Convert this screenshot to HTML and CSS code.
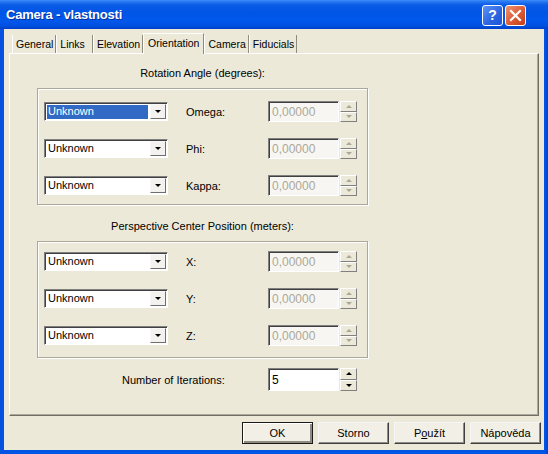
FILE: index.html
```html
<!DOCTYPE html>
<html>
<head>
<meta charset="utf-8">
<link rel="stylesheet" href="styles.css">
</head>
<body>
<div class="window">
  <div class="titlebar">
    <span class="title">Camera - vlastnosti</span>
    <div class="tb-buttons">
      <span class="tb-btn help">?</span>
      <span class="tb-btn close"><svg width="13" height="13" viewBox="0 0 13 13"><path d="M2 2 L11 11 M11 2 L2 11" stroke="#fff" stroke-width="2.2" stroke-linecap="square"/></svg></span>
    </div>
  </div>
  <div class="frame">
    <div class="client">
      <div class="tabs">
        <div class="tab">General</div>
        <div class="tab links">Links</div>
        <div class="tab">Elevation</div>
        <div class="tab selected">Orientation</div>
        <div class="tab">Camera</div>
        <div class="tab">Fiducials</div>
      </div>
      <div class="panel">
        <div class="caption">Rotation Angle (degrees):</div>
        <div class="group">
          <div class="row">
            <div class="combo"><span class="combo-text sel">Unknown</span><span class="combo-btn"><i class="arrow-down"></i></span></div>
            <span class="label">Omega:</span>
            <div class="spin"><span class="field disabled">0,00000</span><span class="spin-btns"><span class="sb"><i class="arrow-up dis"></i></span><span class="sb"><i class="arrow-down dis"></i></span></span></div>
          </div>
          <div class="row">
            <div class="combo"><span class="combo-text">Unknown</span><span class="combo-btn"><i class="arrow-down"></i></span></div>
            <span class="label">Phi:</span>
            <div class="spin"><span class="field disabled">0,00000</span><span class="spin-btns"><span class="sb"><i class="arrow-up dis"></i></span><span class="sb"><i class="arrow-down dis"></i></span></span></div>
          </div>
          <div class="row">
            <div class="combo"><span class="combo-text">Unknown</span><span class="combo-btn"><i class="arrow-down"></i></span></div>
            <span class="label">Kappa:</span>
            <div class="spin"><span class="field disabled">0,00000</span><span class="spin-btns"><span class="sb"><i class="arrow-up dis"></i></span><span class="sb"><i class="arrow-down dis"></i></span></span></div>
          </div>
        </div>
        <div class="caption second">Perspective Center Position (meters):</div>
        <div class="group second">
          <div class="row">
            <div class="combo"><span class="combo-text">Unknown</span><span class="combo-btn"><i class="arrow-down"></i></span></div>
            <span class="label">X:</span>
            <div class="spin"><span class="field disabled">0,00000</span><span class="spin-btns"><span class="sb"><i class="arrow-up dis"></i></span><span class="sb"><i class="arrow-down dis"></i></span></span></div>
          </div>
          <div class="row">
            <div class="combo"><span class="combo-text">Unknown</span><span class="combo-btn"><i class="arrow-down"></i></span></div>
            <span class="label">Y:</span>
            <div class="spin"><span class="field disabled">0,00000</span><span class="spin-btns"><span class="sb"><i class="arrow-up dis"></i></span><span class="sb"><i class="arrow-down dis"></i></span></span></div>
          </div>
          <div class="row">
            <div class="combo"><span class="combo-text">Unknown</span><span class="combo-btn"><i class="arrow-down"></i></span></div>
            <span class="label">Z:</span>
            <div class="spin"><span class="field disabled">0,00000</span><span class="spin-btns"><span class="sb"><i class="arrow-up dis"></i></span><span class="sb"><i class="arrow-down dis"></i></span></span></div>
          </div>
        </div>
        <div class="iter">
          <span class="iter-label">Number of Iterations:</span>
          <div class="spin tall"><span class="field">5</span><span class="spin-btns"><span class="sb"><i class="arrow-up"></i></span><span class="sb"><i class="arrow-down"></i></span></span></div>
        </div>
      </div>
      <div class="buttons">
        <span class="btn default">OK</span>
        <span class="btn">Storno</span>
        <span class="btn">P<u>o</u>užít</span>
        <span class="btn">Nápověda</span>
      </div>
    </div>
  </div>
</div>
</body>
</html>
```

FILE: styles.css
```css
html, body {
  margin: 0;
  padding: 0;
  background: #fff;
}

body {
  font-family: "Liberation Sans", Arial, sans-serif;
  font-size: 11px;
  color: #000;
}

.window {
  width: 548px;
  height: 454px;
  display: flex;
  flex-direction: column;
  background: #0842D8;
  overflow: hidden;
}

.titlebar {
  height: 29px;
  flex: none;
  display: flex;
  align-items: center;
  justify-content: space-between;
  padding-left: 6px;
  background: linear-gradient(#3C8EF8 0px, #2574F2 2px, #0A5CE6 5px, #0055E5 12px, #0258EC 20px, #0050E0 26px, #003FC8 29px);
}

.title {
  color: #fff;
  font-weight: bold;
  font-size: 13px;
  text-shadow: 1px 1px 0 #0A2E9A;
  letter-spacing: -0.2px;
}

.tb-buttons {
  display: flex;
  gap: 2px;
  margin-right: 22px;
  margin-top: 1px;
}

.tb-btn {
  width: 19px;
  height: 19px;
  border: 1px solid #fff;
  border-radius: 3px;
  display: flex;
  align-items: center;
  justify-content: center;
  color: #fff;
  font-weight: bold;
  font-size: 14px;
}

.help {
  background: linear-gradient(135deg, #5C94F8, #2B63E0 60%, #1F55D8);
}

.close {
  background: linear-gradient(135deg, #F0936F, #DB5A34 55%, #C23E18);
}

.frame {
  flex: 1;
  display: flex;
  padding: 0 4px 4px 4px;
  background: linear-gradient(90deg, #0A4FDD, #0055E5 3px, #0055E5 calc(100% - 3px), #0840C8);
}

.client {
  flex: 1;
  background: #ECE9D8;
  display: flex;
  flex-direction: column;
}

.tabs {
  display: flex;
  align-items: flex-end;
  height: 20px;
  margin: 4px 0 0 8px;
  position: relative;
  z-index: 1;
  font-size: 10.5px;
}

.tab {
  height: 18px;
  box-sizing: border-box;
  padding: 0 2px 0 3px;
  line-height: 18px;
  border-left: 1px solid #fff;
  border-right: 1px solid #8E8C80;
  white-space: nowrap;
}

.tab.links {
  padding-right: 7px;
}

.tab.selected {
  height: 21px;
  margin-bottom: -1px;
  padding: 0 4px;
  line-height: 19px;
  border-top: 1px solid #fff;
  background: #ECE9D8;
}

.panel {
  height: 363px;
  box-sizing: border-box;
  margin: 0 5px 0 5px;
  border-top: 1px solid #fff;
  border-left: 1px solid #fff;
  border-right: 1px solid #716F64;
  border-bottom: 1px solid #716F64;
  box-shadow: inset -1px -1px 0 #ACA899;
  display: flex;
  flex-direction: column;
  padding-left: 27px;
}

.caption {
  width: 331px;
  text-align: center;
  line-height: 14px;
  margin-top: 12px;
}

.caption.second {
  margin-top: 14px;
}

.group {
  width: 331px;
  height: 117px;
  box-sizing: border-box;
  margin-top: 8px;
  border: 1px solid #ACA899;
  box-shadow: 1px 1px 0 #fff, inset 1px 1px 0 #fff;
  padding: 12px 0 0 6px;
  display: flex;
  flex-direction: column;
  gap: 16px;
}

.group.second {
  padding-top: 9px;
}

.row {
  height: 21px;
  display: flex;
  align-items: center;
}

.combo {
  width: 124px;
  height: 19px;
  box-sizing: border-box;
  display: flex;
  background: #fff;
  border: 1px solid;
  border-color: #808080 #fff #fff #808080;
  box-shadow: inset 1px 1px 0 #404040;
  padding: 2px 1px 1px 2px;
}

.combo-text {
  flex: 1;
  line-height: 13px;
  padding-left: 1px;
  white-space: nowrap;
}

.combo-text.sel {
  background: #316AC5;
  color: #fff;
  margin-right: 2px;
}

.combo-btn {
  width: 16px;
  box-sizing: border-box;
  background: #F3F2EE;
  border: 1px solid;
  border-color: #F8F8F8 #6E6E6E #6E6E6E #F8F8F8;
  display: flex;
  align-items: center;
  justify-content: center;
  margin-top: -1px;
}

.arrow-down, .arrow-up {
  display: block;
  width: 0;
  height: 0;
  border-left: 3px solid transparent;
  border-right: 3px solid transparent;
}

.arrow-down {
  border-top: 3px solid #000;
}

.arrow-up {
  border-bottom: 3px solid #000;
}

.arrow-down.dis {
  border-top-color: #ACA899;
}

.arrow-up.dis {
  border-bottom-color: #ACA899;
}

.label {
  width: 82px;
  margin-left: 18px;
}

.spin {
  width: 89px;
  height: 21px;
  display: flex;
}

.spin.tall {
  height: 23px;
}

.field {
  width: 71px;
  box-sizing: border-box;
  border: 1px solid;
  border-color: #808080 #fff #fff #808080;
  box-shadow: inset 1px 1px 0 #404040;
  background: #fff;
  padding-left: 3px;
  display: flex;
  align-items: center;
  font-size: 12px;
}

.field.disabled {
  background: #F7F6F2;
  color: #ACA899;
}

.spin-btns {
  width: 17px;
  margin-left: 1px;
  display: flex;
  flex-direction: column;
}

.sb {
  flex: 1;
  box-sizing: border-box;
  border: 1px solid;
  border-color: #fff #808080 #808080 #fff;
  background: #ECE9D8;
  display: flex;
  align-items: center;
  justify-content: center;
}

.iter {
  display: flex;
  align-items: center;
  margin-top: 10px;
  margin-left: 85px;
}

.iter-label {
  width: 146px;
}

.buttons {
  display: flex;
  justify-content: flex-end;
  gap: 5px;
  margin: 6px 3px 0 0;
}

.btn {
  width: 71px;
  height: 22px;
  box-sizing: border-box;
  border: 1px solid;
  border-color: #F5F5F5 #404040 #404040 #F5F5F5;
  box-shadow: inset -1px -1px 0 #8E8C80;
  background: #F2F0E6;
  display: flex;
  align-items: center;
  justify-content: center;
}

.btn.default {
  border: 1px solid #1A1A1A;
  box-shadow: inset 1px 1px 0 #fff, inset -2px -2px 0 #8E8C80;
}
```
